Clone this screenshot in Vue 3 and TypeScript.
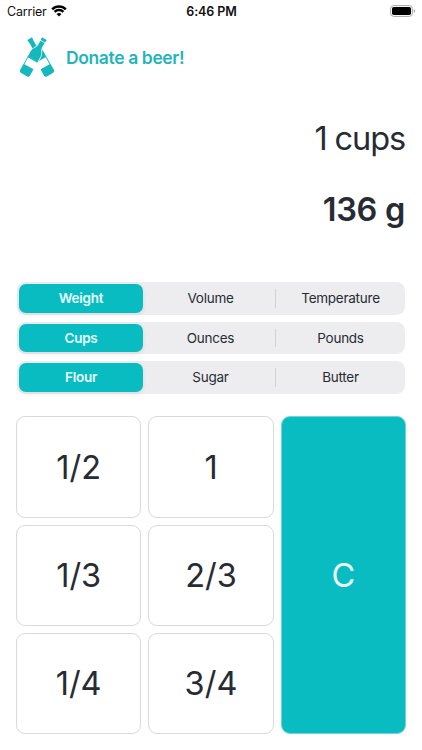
<script setup lang="ts">
import { ref, computed } from 'vue'

interface Segment {
  name: string
  options: string[]
  selected: number
}

const segments = ref<Segment[]>([
  { name: 'Mode', options: ['Weight', 'Volume', 'Temperature'], selected: 0 },
  { name: 'Unit', options: ['Cups', 'Ounces', 'Pounds'], selected: 0 },
  { name: 'Ingredient', options: ['Flour', 'Sugar', 'Butter'], selected: 0 },
])

const keys: string[] = ['1/2', '1', '1/3', '2/3', '1/4', '3/4']
const amounts: Record<string, number> = { '1/2': 1 / 2, '1': 1, '1/3': 1 / 3, '2/3': 2 / 3, '1/4': 1 / 4, '3/4': 3 / 4 }
const entry = ref('1')
const grams = computed(() => Math.round((amounts[entry.value] ?? 0) * 136))
</script>

<template>
  <div class="screen">
    <header class="status">
      <div class="carrier">
        <span>Carrier</span>
        <svg class="wifi" viewBox="0 0 16 12" aria-hidden="true">
          <path d="M1.2 4.3a9.7 9.7 0 0 1 13.6 0" />
          <path d="M3.6 6.8a6.3 6.3 0 0 1 8.8 0" />
          <path class="dot" d="M8 11.6 5.5 9.1a3.6 3.6 0 0 1 5 0z" />
        </svg>
      </div>
      <div class="clock">6:46 PM</div>
      <div class="power">
        <svg class="battery" viewBox="0 0 26 12" aria-hidden="true">
          <rect class="shell" x="0.6" y="0.6" width="21.8" height="10.8" rx="3.2" />
          <rect x="2" y="2" width="19" height="8" rx="1.8" />
          <path class="cap" d="M23.8 4.2v3.6c.9-.3 1.4-1 1.4-1.8s-.5-1.5-1.4-1.8z" />
        </svg>
      </div>
    </header>

    <a class="donate">
      <svg class="bottles" viewBox="0 0 138 150" aria-hidden="true">
        <g transform="translate(47 20) rotate(-29.5)">
          <path class="glass" d="M-8 0H8V8H7V26C8 38 17 40 17 54V118Q17 124 11 124H-11Q-17 124-17 118V54C-17 40-8 38-7 26V8H-8Z" />
          <path class="paper" d="M-18 72H14.500V96H-18Z" />
        </g>
        <g transform="translate(91 20) rotate(29.5)">
          <path class="glass front" d="M-8 0H8V8H7V26C8 38 17 40 17 54V71H-17V54C-17 40-8 38-7 26V8H-8Z" />
          <path class="glass" d="M-17 70H-14.500V96H17V118Q17 124 11 124H-11Q-17 124-17 118Z" />
          <path class="glass" d="M-17 70H17V73H-17Z" />
          <path class="paper" d="M-9 9H9V11H-9Z" />
        </g>
      </svg>
      <span>Donate a beer!</span>
    </a>

    <section class="readout">
      <div class="input">{{ entry }} cups</div>
      <div class="result">{{ grams }} g</div>
    </section>

    <section class="segments">
      <div v-for="seg in segments" :key="seg.name" class="segment">
        <button
          v-for="(option, i) in seg.options"
          :key="option"
          class="option"
          :class="{ active: i === seg.selected, divided: i > 0 && i !== seg.selected && i - 1 !== seg.selected }"
          @click="seg.selected = i"
        >{{ option }}</button>
      </div>
    </section>

    <section class="pad">
      <button v-for="key in keys" :key="key" class="key" @click="entry = key">{{ key }}</button>
      <button class="key clear" @click="entry = '0'">C</button>
    </section>
  </div>
</template>

<style>
body {
  background: #fff;
}
</style>

<style scoped>
.screen {
  box-sizing: border-box;
  width: 422px;
  height: 750px;
  overflow: hidden;
  display: flex;
  flex-direction: column;
  background: #fff;
  color: #272c34;
  font-family: Inter, "Liberation Sans", sans-serif;
}
button {
  margin: 0;
  padding: 0;
  border: 0;
  background: none;
  color: inherit;
  font-family: inherit;
}
.status {
  display: grid;
  grid-template-columns: 1fr auto 1fr;
  align-items: center;
  height: 22px;
  padding: 0 6px 0 7px;
  color: #111;
  font-size: 12.5px;
}
.carrier {
  display: flex;
  align-items: center;
  gap: 4px;
  letter-spacing: -0.2px;
}
.wifi {
  width: 16px;
  height: 12px;
  fill: none;
  stroke: #000;
  stroke-width: 2.5;
}
.wifi .dot {
  fill: #000;
  stroke: none;
}
.clock {
  font-weight: 600;
  letter-spacing: -0.1px;
}
.power {
  display: flex;
  justify-content: flex-end;
}
.battery {
  width: 26px;
  height: 12px;
}
.battery .shell {
  fill: none;
  stroke: #a6a6a6;
  stroke-width: 1;
}
.battery .cap {
  fill: #a6a6a6;
}
.donate {
  display: flex;
  align-items: center;
  gap: 6px;
  height: 50px;
  margin: 10px 0 0 14px;
  color: #1fb5ba;
  font-size: 17.5px;
  font-weight: 600;
  letter-spacing: -0.38px;
}
.bottles {
  width: 46px;
  height: 50px;
}
.glass {
  fill: #15b8bd;
}
.front {
  stroke: #fff;
  stroke-width: 4;
  paint-order: stroke;
}
.paper {
  fill: #fff;
}
.readout {
  height: 200px;
  padding-right: 17px;
  text-align: right;
}
.input,
.result {
  height: 72px;
  line-height: 72px;
  font-size: 32.5px;
}
.input {
  box-sizing: border-box;
  padding-top: 1px;
  margin-top: 20px;
  letter-spacing: -1.1px;
}
.result {
  font-weight: 600;
  letter-spacing: -0.3px;
}
.segments {
  display: flex;
  flex-direction: column;
  gap: 7px;
  padding: 0 17px;
}
.segment {
  display: grid;
  grid-template-columns: repeat(3, 1fr);
  box-sizing: border-box;
  height: 32.6px;
  padding: 2px;
  border-radius: 8.5px;
  background: #ededef;
}
.option {
  position: relative;
  border-radius: 7px;
  font-size: 13.5px;
  letter-spacing: -0.25px;
}
.option:nth-child(2) {
  padding-right: 1px;
}
.option:nth-child(3) {
  padding-left: 3px;
}
.active {
  margin-right: 4px;
  background: #09bcc1;
  color: #e9ffff;
  font-weight: 600;
  box-shadow: 0 2px 5px rgba(0, 0, 0, 0.08);
}
.divided::before {
  content: "";
  position: absolute;
  left: 0;
  top: 5px;
  bottom: 5px;
  width: 1px;
  background: #d3d3d7;
}
.pad {
  display: grid;
  grid-template-columns: repeat(3, 1fr);
  grid-template-rows: repeat(3, 1fr);
  gap: 7px;
  height: 317.5px;
  margin-top: 22.7px;
  padding: 0 16px;
}
.key {
  border: 1px solid #d9d9dc;
  border-radius: 9px;
  font-size: 32.5px;
}
.clear {
  grid-column: 3;
  grid-row: 1 / 4;
  border-color: #6fd5d8;
  background: #09bcc1;
  color: #effdff;
}
</style>
